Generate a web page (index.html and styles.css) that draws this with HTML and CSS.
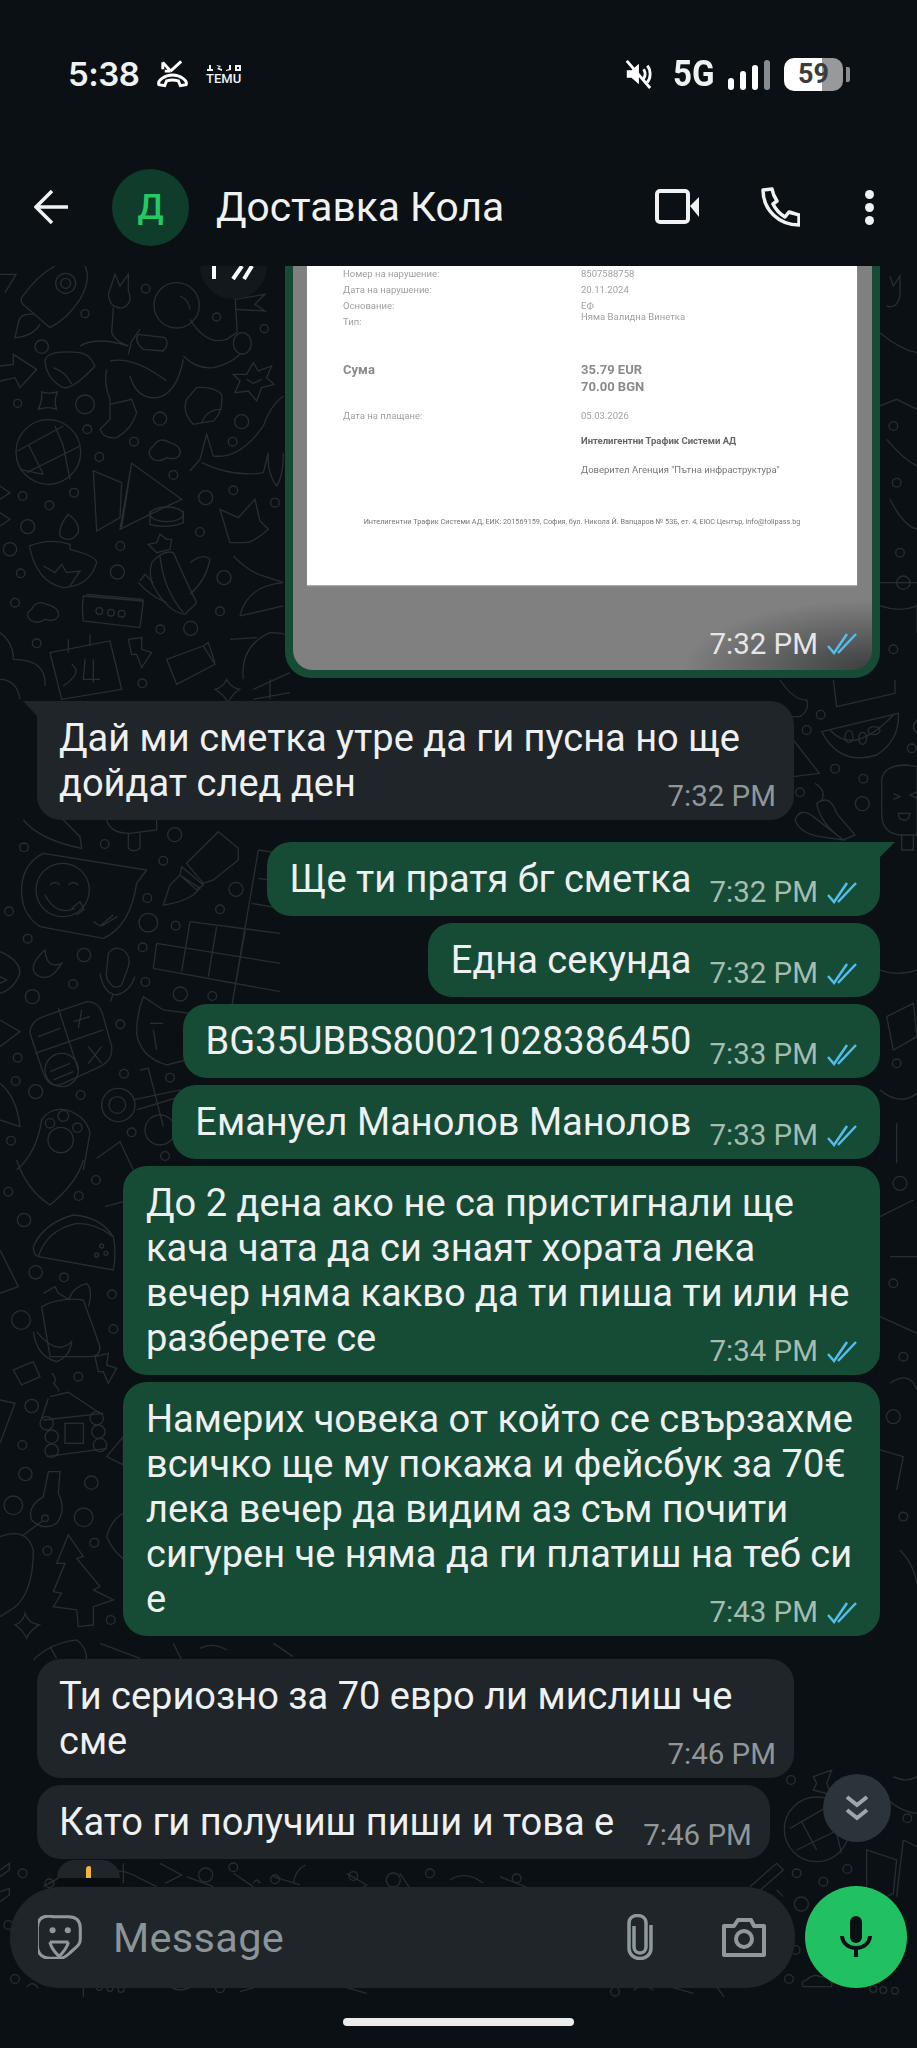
FILE: index.html
```html
<!DOCTYPE html>
<html>
<head>
    <meta charset="utf-8">
    <link rel="stylesheet" href="styles.css">
</head>
<body>
<div class="phone">

    <div class="status">
        <span class="clock">5:38</span>
        <svg class="missed" viewBox="0 0 34 28"><path d="M7 2l8 9M7 2v7M15 11l-6 0M15 11L26 1"/><path d="M3 25c-2-4 6-10 14-10s16 6 14 10l-6 1-2-5c-4-1-8-1-12 0l-2 5z"/></svg>
        <div class="temu">
            <svg viewBox="0 0 36 8"><path d="M1 7h6V5H5V1H3v4H1zM10 1l3 2-2 2 5 2v-2l-3-1 2-2zM20 7l5-1V1h-2v4l-3 1zM29 1h6v6h-6zM31 3v2h2V3z"/></svg>
            <span>TEMU</span>
        </div>
        <div class="status-right">
            <svg class="mute" viewBox="0 0 30 34"><path class="solid" d="M3 13h5l8-7v22l-8-7H3z"/><path class="line" d="M21 12c2 3 2 7 0 10M25 8c4 5 4 13 0 18M3 3l25 29"/></svg>
            <span class="net">5G</span>
            <div class="signal"><i class="s1"></i><i class="s2"></i><i class="s3"></i><i class="s4"></i></div>
            <div class="battery"><span>59</span></div>
            <div class="battery-tip"></div>
        </div>
    </div>

    <div class="appbar">
        <svg class="back" viewBox="0 0 36 36"><path d="M34 18H3M18 2L2 18l16 16"/></svg>
        <div class="avatar">Д</div>
        <div class="title">Доставка Кола</div>
        <svg class="video" viewBox="0 0 44 36"><rect x="2" y="2" width="31" height="31" rx="3"/><path class="solid" d="M35 17l9-9v20z"/></svg>
        <svg class="call" viewBox="0 0 40 40"><path d="M3 3l9-1c1 6 3 9 5 12l-4 3c3 6 7 10 12 13l4-5c3 1 7 2 10 3v10c-20 0-36-15-36-35z"/></svg>
        <div class="dots"><i></i><i></i><i></i></div>
    </div>

    <div class="chat">
        <svg class="wall" viewBox="0 266 917 1731">
            <g transform="translate(0 266) scale(.3333)">
                <path d="M165 0Q110 30 65 95Q60 110 75 120L150 185Q200 160 240 100Q275 40 255 0M100 145Q60 140 55 170L45 215Q100 210 120 175M0 25H48L15 80M0 300L40 295V265L110 310L60 365L45 335L0 345"/>
                <circle cx="197" cy="52" r="30"/><circle cx="197" cy="52" r="15"/>
                <path d="M325 85L345 25L360 60L385 25V75Q400 110 370 125Q330 130 325 85M340 125L335 200Q345 225 385 240M540 90Q565 100 570 130M420 190L395 225L385 265M570 160Q620 240 680 220L710 200M705 90L712 200M705 100L795 85L765 115L795 135L705 130"/>
                <circle cx="530" cy="118" r="68"/><ellipse cx="727" cy="232" rx="27" ry="32"/>
                <path d="M415 205L495 215Q510 235 490 255L430 250Q400 225 415 205M240 240Q290 210 385 240M135 285Q140 250 240 260Q270 265 285 300Q220 370 190 365Q140 340 135 285M160 305Q200 320 215 355M550 270Q590 310 640 305Q690 295 720 265M330 285Q400 270 500 345M320 310Q310 350 330 400V460L300 490Q310 520 350 515Q395 490 410 440L395 400L330 415M390 330Q410 400 470 395Q530 385 550 280"/>
                <path d="M760 290L775 315L815 300L800 335L822 355L785 365L770 405L745 375L705 380L720 345L700 325L740 325ZM740 340L760 352L785 340M590 365Q640 360 665 385Q670 440 640 465L580 475Q545 440 560 400ZM605 470Q620 430 665 430"/>
                <path d="M570 615L600 580L620 505L640 570Q720 580 790 480Q810 420 850 390M605 590Q700 635 790 620L805 560Q800 620 830 660Q850 630 850 560M125 378Q145 385 172 378Q160 405 170 430Q145 420 115 430Q128 405 125 378Z"/>
                <circle cx="145" cy="558" r="97"/><path d="M52 555L190 480M80 620L240 540M85 535L130 625M190 540L165 480M190 540L210 640M130 625L60 610"/>
                <path d="M280 615L365 650L360 755L290 795ZM395 592L545 700L450 745L360 790ZM395 592L365 785M450 735V775Q500 790 550 770V735"/><ellipse cx="500" cy="745" rx="50" ry="22"/>
                <path d="M460 580Q435 560 460 540Q480 510 510 530Q545 540 540 565Q530 585 500 575Q480 590 460 580ZM95 1065Q70 1045 95 1030Q110 1000 140 1015Q180 1025 175 1050Q165 1070 135 1060Q115 1075 95 1065Z"/>
                <path d="M88 840Q150 815 210 835V850Q290 870 290 890Q270 960 190 965Q110 950 88 840ZM205 745Q175 780 180 810Q210 835 235 800Q240 770 205 745ZM130 900L165 920L185 895L200 920L240 915L210 960"/>
                <path d="M455 890Q490 850 520 860Q560 950 590 1010L555 1045Q505 1040 460 960Q445 930 455 890ZM445 835L470 830L480 805L500 820L515 820L510 850L470 860ZM480 870Q490 970 550 1040M420 945L435 925L460 950M415 950Q450 990 500 1010M570 890Q610 860 630 880Q620 940 570 985"/>
                <path d="M250 990L430 1005L420 1085L250 1065Q245 1030 250 990ZM260 985L430 1000"/><circle cx="298" cy="1035" r="10"/><circle cx="333" cy="1040" r="10"/><circle cx="365" cy="1043" r="10"/>
                <path d="M150 1160L330 1125L365 1270L185 1300ZM205 1120V1160M270 1105V1140M190 1260Q250 1220 215 1195M255 1180L250 1240H300M280 1180V1250M385 1120L425 1115V1150L455 1160L425 1205L410 1165L395 1165ZM500 1180L610 1140L645 1195L530 1255ZM610 1140L625 1130L645 1190"/>
                <path d="M660 730L715 755L765 700L780 765L805 790Q760 830 735 830H690L675 780ZM700 870Q750 920 790 930L850 950M720 1050Q740 960 850 950M720 1050L850 1020M690 1120L770 1115M730 1240Q720 1140 810 1100Q850 1100 870 1110M760 1270L870 1220M760 1300L870 1280M810 1240V1300M680 1240Q690 1265 720 1270Q695 1285 685 1310Q670 1285 645 1270Q670 1265 680 1240Z"/>
                <path d="M0 660L30 680L0 700M0 740L30 760L0 780M0 1100Q40 1130 40 1180Q140 1180 135 1260M0 1240Q50 1240 60 1300"/>
                <circle cx="255" cy="143" r="12"/><circle cx="125" cy="242" r="20"/><circle cx="437" cy="68" r="13"/><circle cx="650" cy="153" r="12"/><circle cx="793" cy="188" r="12"/><circle cx="53" cy="412" r="12"/><circle cx="255" cy="415" r="28"/><circle cx="262" cy="490" r="13"/><circle cx="480" cy="458" r="20"/><circle cx="725" cy="467" r="21"/><circle cx="402" cy="527" r="13"/><circle cx="298" cy="573" r="13"/><circle cx="698" cy="527" r="13"/><circle cx="520" cy="627" r="13"/><circle cx="68" cy="690" r="13"/><circle cx="222" cy="680" r="13"/><circle cx="148" cy="718" r="13"/><circle cx="83" cy="782" r="21"/><circle cx="30" cy="850" r="20"/><circle cx="617" cy="695" r="21"/><circle cx="700" cy="673" r="13"/><circle cx="825" cy="710" r="13"/><circle cx="600" cy="798" r="13"/><circle cx="361" cy="840" r="13"/><circle cx="352" cy="918" r="21"/><circle cx="62" cy="922" r="13"/><circle cx="672" cy="935" r="21"/><circle cx="45" cy="1010" r="13"/><circle cx="660" cy="1036" r="13"/><circle cx="481" cy="1090" r="13"/><circle cx="572" cy="1087" r="21"/><circle cx="110" cy="1132" r="13"/><circle cx="427" cy="1252" r="13"/>
            </g>
            <g transform="translate(0 820) scale(.3333)">
                <path d="M130 100L440 150L410 190Q390 320 310 355L120 320Q60 280 65 200Q70 130 130 100ZM150 195Q165 180 180 195M205 195Q220 180 235 195M135 225Q170 290 225 265M215 265L240 245L252 268L230 285M280 305L300 318L340 285M305 318L352 290"/>
                <circle cx="188" cy="210" r="80"/>
                <path d="M490 255L510 195L540 165L600 205L580 225Q540 250 490 255ZM545 140L610 195L590 210L540 165ZM560 130L655 35L715 85V120L640 180L610 190Z"/>
                <path d="M470 370L840 430M570 305L840 340M460 445L840 515M470 370L460 445M570 305L545 455M650 320L625 470M735 335L695 560M775 90L695 560M840 100L775 90M775 175L840 185M755 250L840 265"/>
                <path d="M135 390Q80 440 110 465Q150 490 185 430Q140 450 135 390ZM325 400Q345 375 370 390Q395 410 385 440L365 495Q345 510 330 490Q315 475 320 450ZM300 460Q310 520 350 525Q390 515 405 470M338 525L332 545"/>
                <path d="M130 590L260 545Q300 545 310 590L335 680Q340 720 300 740L190 790Q150 810 130 760L90 640Q90 605 130 590ZM175 565L235 750M105 700L310 630M115 650L180 625M220 605L270 590M245 570L235 625M265 680L305 730M305 680L265 730M150 755L210 730M160 780L220 755"/>
                <circle cx="185" cy="750" r="50"/>
                <path d="M430 530L490 570L570 580L560 720L500 735Q420 710 410 640Q410 580 430 530ZM450 610H490M460 630L470 690"/>
                <path d="M400 840L540 810V830L410 870M420 750L445 745L490 920"/><circle cx="355" cy="855" r="50"/><circle cx="352" cy="855" r="25"/><circle cx="480" cy="930" r="45"/>
                <path d="M50 1050Q110 1000 125 900Q150 860 200 870Q260 890 270 940L250 1050"/><circle cx="150" cy="910" r="14"/><circle cx="190" cy="888" r="16"/><circle cx="232" cy="923" r="14"/><circle cx="182" cy="960" r="38"/>
                <path d="M0 395Q60 420 60 460Q40 510 0 520M0 600L60 635L0 680M0 790Q50 830 60 920L0 900M0 470L20 480L0 490M320 0Q330 40 390 40L470 30V0M385 40V85Q400 100 420 85V40M70 0Q120 60 245 85L240 50L190 0M290 1015L360 965L400 1050"/>
                <circle cx="72" cy="82" r="13"/><circle cx="314" cy="72" r="13"/><circle cx="524" cy="44" r="21"/><circle cx="490" cy="122" r="13"/><circle cx="660" cy="268" r="13"/><circle cx="708" cy="208" r="21"/><circle cx="442" cy="234" r="13"/><circle cx="445" cy="308" r="28"/><circle cx="527" cy="317" r="13"/><circle cx="27" cy="274" r="13"/><circle cx="83" cy="356" r="13"/><circle cx="428" cy="382" r="13"/><circle cx="252" cy="405" r="20"/><circle cx="219" cy="492" r="13"/><circle cx="97" cy="530" r="21"/><circle cx="436" cy="486" r="13"/><circle cx="541" cy="522" r="21"/><circle cx="637" cy="528" r="13"/><circle cx="361" cy="613" r="13"/><circle cx="53" cy="713" r="13"/><circle cx="47" cy="783" r="13"/><circle cx="107" cy="815" r="21"/><circle cx="242" cy="825" r="13"/><circle cx="372" cy="761" r="13"/><circle cx="510" cy="773" r="13"/><circle cx="395" cy="937" r="13"/><circle cx="33" cy="962" r="13"/><circle cx="495" cy="1008" r="13"/>
            </g>
            <g transform="translate(0 1160) scale(.3333)">
                <path d="M115 290L340 330Q350 280 340 230Q300 170 220 165Q130 190 100 260Q100 285 115 290ZM115 290Q140 210 230 190Q290 190 340 230M50 0Q80 90 150 135Q230 70 250 0M315 140L370 125"/>
                <circle cx="305" cy="258" r="6"/><circle cx="290" cy="285" r="6"/><circle cx="318" cy="280" r="6"/>
                <path d="M125 440Q180 410 250 420L300 560Q300 590 270 590L150 590ZM130 400L165 380L175 400L210 420M205 420Q220 380 260 370Q280 390 265 440M100 515Q110 590 170 605Q210 590 215 545Q170 590 110 515M285 590L325 580L320 615L350 625L325 670L310 635L295 635ZM40 630L100 605L120 650L65 675Z"/>
                <path d="M150 710L205 697L300 760M145 715L125 775M130 780L310 760M140 890L320 865M155 640Q175 660 160 670Q180 690 175 695"/>
                <rect x="195" y="790" width="55" height="60"/><circle cx="140" cy="790" r="20"/><circle cx="155" cy="830" r="20"/><circle cx="155" cy="872" r="20"/><circle cx="290" cy="775" r="20"/><circle cx="295" cy="815" r="20"/><circle cx="300" cy="855" r="20"/>
                <path d="M145 935H180L175 1000Q200 1050 170 1090Q130 1115 95 1080Q80 1040 130 1010ZM125 1085L70 1125M0 1130Q80 1100 100 1170Q100 1300 40 1345L0 1370"/>
                <circle cx="135" cy="1075" r="10"/>
                <path d="M205 1125L250 1190L230 1195L300 1280L280 1290L340 1320L280 1340V1395L235 1400L230 1350L160 1340L185 1300L160 1295L195 1210L170 1210ZM75 1360Q85 1390 118 1395Q90 1410 80 1435Q70 1410 45 1395Q70 1385 75 1360ZM100 1500Q150 1450 230 1440Q260 1460 260 1500M0 270L55 380L0 400M0 720L45 730L0 850M320 1130Q340 1060 390 1055M320 1130Q340 1180 390 1210M320 890L370 830V915Z"/>
                <circle cx="25" cy="95" r="13"/><circle cx="72" cy="180" r="20"/><circle cx="236" cy="108" r="13"/><circle cx="288" cy="60" r="13"/><circle cx="107" cy="337" r="20"/><circle cx="192" cy="352" r="13"/><circle cx="336" cy="403" r="13"/><circle cx="340" cy="507" r="13"/><circle cx="63" cy="480" r="28"/><circle cx="235" cy="650" r="13"/><circle cx="95" cy="738" r="20"/><circle cx="67" cy="855" r="13"/><circle cx="76" cy="942" r="20"/><circle cx="274" cy="968" r="20"/><circle cx="40" cy="1036" r="28"/><circle cx="251" cy="1072" r="28"/><circle cx="283" cy="1148" r="13"/><circle cx="142" cy="1172" r="13"/><circle cx="332" cy="1380" r="13"/>
            </g>
            <g transform="translate(780 680) scale(.3333)">
                <path d="M125 155L355 100Q360 180 290 225Q180 260 125 155ZM150 150Q220 230 340 105M160 0L170 80L345 40V0"/>
                <ellipse cx="207" cy="170" rx="12" ry="18"/><ellipse cx="248" cy="175" rx="12" ry="18"/><ellipse cx="282" cy="152" rx="18" ry="12"/>
                <path d="M45 420Q60 380 100 410L190 480L120 470Q60 460 45 420ZM110 370Q150 340 170 400L225 465L190 480Q120 430 110 370ZM105 310Q140 330 125 360M305 300Q310 255 380 255L411 260V465H360Q305 460 305 400ZM365 465V510H400V465M40 180L118 280L40 290M355 400H390Q385 425 372 420Q355 420 355 400ZM340 340L360 350L340 358M411 335L390 345L411 355"/>
                <circle cx="122" cy="104" r="13"/><circle cx="80" cy="150" r="13"/><circle cx="165" cy="266" r="13"/><circle cx="250" cy="296" r="13"/><circle cx="247" cy="371" r="21"/><circle cx="395" cy="205" r="13"/><circle cx="60" cy="337" r="13"/>
                <path d="M411 120Q390 140 411 160M0 0Q40 60 80 60Q90 90 60 110H0"/>
            </g>
            <g transform="translate(600 1760) scale(.3333)">
                <circle cx="650" cy="208" r="97"/><path d="M570 205L700 130M590 270L745 195M605 185L650 270M700 180L725 280"/>
                <path d="M800 270L890 300L880 400L800 440ZM910 240L951 260M910 240L890 410M640 50L695 30L680 70L695 105L640 90L650 70ZM620 660Q640 640 660 650Q700 650 695 680H610Q600 665 620 660ZM880 50Q920 70 951 50M830 70Q870 150 951 160"/>
                <circle cx="573" cy="60" r="13"/><circle cx="922" cy="175" r="13"/><circle cx="590" cy="340" r="13"/><circle cx="670" cy="365" r="13"/><circle cx="742" cy="327" r="13"/><circle cx="604" cy="432" r="21"/><circle cx="587" cy="570" r="13"/><circle cx="567" cy="657" r="13"/><circle cx="45" cy="695" r="13"/><circle cx="820" cy="687" r="10"/><circle cx="850" cy="690" r="10"/><circle cx="885" cy="692" r="10"/>
                <path d="M450 380L530 310L550 330L470 400M530 390L550 410M100 690Q130 670 160 690M210 680L280 700M350 680L375 715"/>
            </g>
            <g transform="translate(880 266) scale(.3333)">
                <path d="M30 30L40 60L60 30V90Q50 130 20 120M0 200Q60 250 111 260M0 420L50 400L111 430M20 520Q70 580 111 600M30 700Q70 780 111 790M0 950H111M0 1020Q60 1040 111 1020V1100"/>
                <circle cx="40" cy="480" r="13"/><circle cx="60" cy="860" r="13"/><circle cx="50" cy="650" r="13"/><circle cx="70" cy="950" r="20"/><circle cx="40" cy="1150" r="13"/>
            </g>
            <g transform="translate(880 950) scale(.3333)">
                <path d="M0 60Q50 80 111 60M20 200L100 160L111 260L40 300ZM0 420Q60 470 111 430M50 520V640M0 800L100 750M30 920H111M0 1100L111 1150M30 1300Q90 1260 111 1320M0 1500L70 1520L50 1620M60 1800Q100 1840 111 1900"/>
                <circle cx="50" cy="340" r="13"/><circle cx="60" cy="700" r="21"/><circle cx="40" cy="1000" r="13"/><circle cx="70" cy="1220" r="13"/><circle cx="40" cy="1400" r="21"/><circle cx="70" cy="1700" r="13"/>
            </g>
            <g transform="translate(0 1640) scale(.3333)">
                <path d="M150 20L170 55M300 10L420 55M520 10L545 60M600 25Q640 5 680 30M820 10L880 50"/>
                <path d="M130 740L200 700L260 720M300 705Q350 680 400 705L470 740M560 710L640 740M700 700L760 740M820 710L900 735M1040 700L1100 735L1040 770M1200 700L1240 760M1350 720Q1400 690 1450 730M1500 710L1600 750" />
                <circle cx="1060" cy="708" r="13"/><circle cx="1180" cy="720" r="21"/><circle cx="1290" cy="700" r="13"/><circle cx="1550" cy="715" r="13"/>
            </g>
            <g transform="translate(0 1860) scale(.3333)">
                <path d="M0 30L28 10L28 30L0 50M0 95L28 85L28 105L0 125M370 10V70M480 10L545 45L495 70M760 70Q770 50 780 70M880 70Q885 30 917 15M80 380Q100 360 115 385M250 380V410M510 380Q540 400 575 380M720 395L790 375M1030 380L1100 400"/>
                <circle cx="68" cy="40" r="13"/><circle cx="148" cy="70" r="13"/><circle cx="617" cy="45" r="21"/><circle cx="700" cy="22" r="13"/><circle cx="825" cy="58" r="13"/><circle cx="25" cy="195" r="13"/><circle cx="45" cy="357" r="13"/><circle cx="298" cy="382" r="9"/><circle cx="330" cy="385" r="9"/><circle cx="363" cy="388" r="9"/><circle cx="660" cy="385" r="13"/>
            </g>
        </svg>

        <div class="forward"><svg viewBox="0 0 66 32"><path d="M14 0V13M33 13L42 0M44 13L52 0"/></svg></div>

        <div class="messages">
            <div class="shot">
                <div class="sheet">
                    <div class="row"><span>Номер на нарушение:</span><span>8507588758</span></div>
                    <div class="row"><span>Дата на нарушение:</span><span>20.11.2024</span></div>
                    <div class="row"><span>Основание:</span><span>ЕФ</span></div>
                    <div class="row"><span>Тип:</span><span class="type">Няма Валидна Винетка</span></div>
                    <div class="row sum"><span>Сума</span><span>35.79 EUR</span></div>
                    <div class="row big"><span></span><span>70.00 BGN</span></div>
                    <div class="row paid"><span>Дата на плащане:</span><span>05.03.2026</span></div>
                    <div class="row company"><span></span><b>Интелигентни Трафик Системи АД</b></div>
                    <div class="row agency"><span></span><span>Доверител Агенция "Пътна инфраструктура"</span></div>
                    <div class="legal">Интелигентни Трафик Системи АД, ЕИК: 201569159, София, бул. Никола Й. Вапцаров № 53Б, ет. 4, ЕЮС Център, info@tollpass.bg</div>
                </div>
                <div class="shot-meta">
                    <span>7:32 PM</span>
                    <svg class="ticks" viewBox="0 0 30 22"><path d="M1 13l6 7L20 1M11 20L29 1"/></svg>
                </div>
            </div>

            <div class="msg in wide tail first">Дай ми сметка утре да ги пусна но ще<br>дойдат след ден<span class="meta">7:32 PM</span></div>

            <div class="msg out tail second">Ще ти пратя бг сметка<span class="meta">7:32 PM<svg class="ticks" viewBox="0 0 30 22"><path d="M1 13l6 7L20 1M11 20L29 1"/></svg></span></div>
            <div class="msg out">Една секунда<span class="meta">7:32 PM<svg class="ticks" viewBox="0 0 30 22"><path d="M1 13l6 7L20 1M11 20L29 1"/></svg></span></div>
            <div class="msg out">BG35UBBS80021028386450<span class="meta">7:33 PM<svg class="ticks" viewBox="0 0 30 22"><path d="M1 13l6 7L20 1M11 20L29 1"/></svg></span></div>
            <div class="msg out">Емануел Манолов Манолов<span class="meta">7:33 PM<svg class="ticks" viewBox="0 0 30 22"><path d="M1 13l6 7L20 1M11 20L29 1"/></svg></span></div>
            <div class="msg out wide">До 2 дена ако не са пристигнали ще<br>кача чата да си знаят хората лека<br>вечер няма какво да ти пиша ти или не<br>разберете се<span class="meta">7:34 PM<svg class="ticks" viewBox="0 0 30 22"><path d="M1 13l6 7L20 1M11 20L29 1"/></svg></span></div>
            <div class="msg out wide">Намерих човека от който се свързахме<br>всичко ще му покажа и фейсбук за 70€<br>лека вечер да видим аз съм почити<br>сигурен че няма да ги платиш на теб си<br>е<span class="meta">7:43 PM<svg class="ticks" viewBox="0 0 30 22"><path d="M1 13l6 7L20 1M11 20L29 1"/></svg></span></div>

            <div class="msg in wide third">Ти сериозно за 70 евро ли мислиш че<br>сме<span class="meta">7:46 PM</span></div>
            <div class="msg in">Като ги получиш пиши и това е<span class="meta">7:46 PM</span></div>
        </div>

        <div class="reaction"><i></i></div>

        <div class="scroll-down">
            <svg viewBox="0 0 26 28"><path d="M3 3l10 8 10-8M3 16l10 8 10-8"/></svg>
        </div>

        <div class="composer">
            <div class="input">
                <svg class="sticker" viewBox="115 160 130 130"><path d="M160 165h45q35 0 35 35v30q0 15-12 25l-20 18q-15 15-30 15h-25q-40 0-40-40v-50q0-35 35-35zM150 240h55M205 240q-5 20-30 45M150 240q5 20 25 40"/><circle cx="158" cy="205" r="9"/><circle cx="203" cy="205" r="9"/></svg>
                <span class="placeholder">Message</span>
                <svg class="clip" viewBox="0 0 28 46"><path d="M8 12v21c0 8 12 8 12 0V9C20-1 3-1 3 9v25c0 14 22 14 22 0V11"/></svg>
                <svg class="camera" viewBox="0 0 44 40"><path d="M2 9h10l4-6h13l3 6h10v29H2z"/><circle cx="22" cy="22" r="8"/></svg>
            </div>
            <div class="mic">
                <svg viewBox="0 0 32 42"><rect x="10" y="0" width="12" height="27" rx="6"/><path class="line" d="M2 20c1 16 27 16 28 0M16 32v9"/></svg>
            </div>
        </div>
    </div>

    <div class="navbar"><div class="home"></div></div>
</div>
</body>
</html>
```

FILE: styles.css
```css
* {
    box-sizing: border-box;
}
html, body {
    margin: 0;
    padding: 0;
    background: #0b1014;
}
.phone {
    display: flex;
    flex-direction: column;
    width: 917px;
    height: 2048px;
    overflow: hidden;
    background: #0b1014;
    color: #f0f2f2;
    font-family: Roboto, "Noto Sans", sans-serif;
}

/* status bar */
.status {
    display: flex;
    align-items: center;
    height: 48px;
    margin-top: 50px;
    margin-bottom: 50px;
    padding-left: 68px;
    padding-right: 67px;
}
.clock {
    width: 88px;
    font-family: Inter, Roboto, sans-serif;
    font-size: 33px;
    font-weight: 600;
    letter-spacing: -0.5px;
}
.missed {
    width: 33px;
    height: 28px;
    fill: none;
    stroke: #fff;
    stroke-width: 3;
}
.temu {
    display: flex;
    flex-direction: column;
    margin-left: 17px;
    width: 38px;
    font-size: 13px;
    font-weight: 500;
    line-height: 12px;
    color: #f0f2f2;
}
.temu svg {
    width: 36px;
    height: 8px;
    fill: #f0f2f2;
    margin-bottom: 1px;
}
.status-right {
    display: flex;
    align-items: center;
    margin-left: auto;
}
.mute {
    width: 28px;
    height: 32px;
}
.mute .solid {
    fill: #fff;
}
.mute .line {
    fill: none;
    stroke: #fff;
    stroke-width: 3;
}
.net {
    margin-left: 21px;
    font-size: 36px;
    font-weight: 700;
    transform: scaleX(.92);
    transform-origin: left;
}
.signal {
    display: flex;
    align-items: flex-end;
    gap: 6px;
    margin-left: 10px;
    height: 31px;
}
.signal i {
    display: block;
    width: 6px;
    border-radius: 3px;
    background: #fff;
}
.s1 { height: 12px; }
.s2 { height: 19px; }
.s3 { height: 25px; }
.s4 { height: 30px; background: #8a8d8f !important; }
.battery {
    width: 59px;
    height: 33px;
    margin-left: 14px;
    border-radius: 10px;
    background: linear-gradient(90deg, #fff 0, #fff 38px, #97999b 38px);
    color: #3a3c3e;
    font-size: 27px;
    font-weight: 700;
    line-height: 33px;
    text-align: center;
}
.battery-tip {
    width: 4px;
    height: 15px;
    margin-left: 3px;
    border-radius: 0 2px 2px 0;
    background: #8a8d8f;
}

/* app bar */
.appbar {
    display: flex;
    align-items: center;
    height: 118px;
    padding-left: 34px;
    padding-right: 43px;
}
.back {
    width: 36px;
    height: 36px;
    fill: none;
    stroke: #f0f2f2;
    stroke-width: 3.5;
}
.avatar {
    width: 77px;
    height: 77px;
    margin-left: 42px;
    border-radius: 50%;
    background: #103c2c;
    color: #25c964;
    font-size: 35px;
    font-weight: 500;
    line-height: 77px;
    text-align: center;
}
.title {
    margin-left: 27px;
    font-size: 40.7px;
}
.video {
    width: 44px;
    height: 36px;
    margin-left: auto;
    fill: none;
    stroke: #f0f2f2;
    stroke-width: 4;
}
.video .solid {
    fill: #f0f2f2;
    stroke: none;
}
.call {
    width: 40px;
    height: 40px;
    margin-left: 61px;
    fill: none;
    stroke: #f0f2f2;
    stroke-width: 3.5;
    stroke-linejoin: round;
}
.dots {
    display: flex;
    flex-direction: column;
    gap: 4px;
    margin-left: 65px;
}
.dots i {
    display: block;
    width: 9px;
    height: 9px;
    border-radius: 50%;
    background: #f0f2f2;
}

/* chat */
.chat {
    position: relative;
    flex: 1;
    overflow: hidden;
}
.wall {
    position: absolute;
    top: 0;
    left: 0;
    width: 917px;
    height: 1731px;
    fill: none;
    stroke: #282d31;
    stroke-width: 4;
}
.messages {
    position: relative;
    display: flex;
    flex-direction: column;
    gap: 7px;
    height: 1620px;
    padding-left: 37px;
    padding-right: 37px;
}
.msg {
    position: relative;
    width: fit-content;
    padding: 15px 23px 14px;
    border-radius: 24px;
    font-size: 38px;
    line-height: 45px;
    color: #eef0f1;
}
.msg.wide {
    width: 757px;
}
.in {
    align-self: flex-start;
    padding-left: 22px;
    padding-right: 18px;
    background: #1f2528;
}
.out {
    align-self: flex-end;
    background: #164b36;
}
.first {
    margin-top: 16px;
}
.second {
    margin-top: 15px;
}
.third {
    margin-top: 16px;
}
.tail.in {
    border-top-left-radius: 0;
}
.tail.in::before {
    content: "";
    position: absolute;
    top: 0;
    left: -14px;
    width: 15px;
    height: 16px;
    background: #1f2528;
    clip-path: polygon(0 0, 100% 0, 100% 100%);
}
.tail.out {
    border-top-right-radius: 0;
}
.tail.out::after {
    content: "";
    position: absolute;
    top: 0;
    right: -15px;
    width: 16px;
    height: 16px;
    background: #164b36;
    clip-path: polygon(0 0, 100% 0, 0 100%);
}
.meta {
    float: right;
    display: flex;
    align-items: center;
    margin-top: 13px;
    margin-bottom: -13px;
    margin-left: 29px;
    font-size: 29.5px;
    color: #90979b;
}
.out .meta {
    margin-left: 18px;
    color: #a3bdb1;
}
.ticks {
    width: 30px;
    height: 22px;
    margin-left: 9px;
    fill: none;
    stroke: #53bdeb;
    stroke-width: 2.5;
}

/* image bubble, cut by the top of the list */
.shot {
    position: relative;
    align-self: flex-end;
    width: 595px;
    height: 412px;
    padding: 0 8px 8px;
    border-radius: 0 0 26px 26px;
    background: #164b36;
}
.shot::before {
    content: "";
    position: absolute;
    top: 0;
    left: 8px;
    right: 8px;
    bottom: 8px;
    border-radius: 0 0 20px 20px;
    background: radial-gradient(ellipse 190px 70px at 100% 100%, #3b3d3e, #808080 100%), #808080;
}
.sheet {
    position: relative;
    width: 550px;
    height: 319px;
    margin-left: 14px;
    padding-left: 36px;
    background: #fff;
    box-shadow: 0 1px 1px #aaa;
    color: #a0a0a0;
    font-size: 9.5px;
    filter: blur(.7px);
}
.row {
    display: grid;
    grid-template-columns: 238px 1fr;
    height: 16px;
    line-height: 16px;
}
.row .type {
    margin-top: -5px;
}
.sum {
    margin-top: 31px;
}
.sum, .big {
    height: 17px;
    line-height: 17px;
    font-size: 13px;
    font-weight: 700;
    color: #8a8a8a;
}
.paid {
    margin-top: 13px;
}
.company {
    margin-top: 9px;
    color: #666;
}
.agency {
    margin-top: 13px;
    color: #777;
}
.legal {
    margin-top: 36px;
    margin-left: -36px;
    font-size: 7.3px;
    line-height: 16px;
    text-align: center;
    color: #777;
}
.shot-meta {
    position: absolute;
    right: 23px;
    bottom: 17px;
    display: flex;
    align-items: center;
    font-size: 29.5px;
    color: #e6e6e6;
}
.forward {
    position: absolute;
    top: 0;
    left: 200px;
    width: 67px;
    height: 33px;
    border-radius: 0 0 34px 34px;
    background: #12191e;
}
.forward svg {
    display: block;
    width: 66px;
    height: 32px;
    fill: none;
    stroke: #fff;
    stroke-width: 4;
}
.reaction {
    position: absolute;
    top: 1594px;
    left: 57px;
    width: 63px;
    height: 18px;
    border-radius: 32px 32px 0 0;
    background: #1f2528;
    box-shadow: 0 8px 0 #0a0d10;
}
.reaction i {
    position: absolute;
    top: 6px;
    left: 29px;
    width: 5px;
    height: 12px;
    border-radius: 4px 2px 0 0;
    background: #f4b43c;
}
.scroll-down {
    position: absolute;
    top: 1508px;
    left: 823px;
    display: flex;
    align-items: center;
    justify-content: center;
    width: 68px;
    height: 68px;
    border-radius: 50%;
    background: #2b343a;
}
.scroll-down svg {
    width: 26px;
    height: 28px;
    fill: none;
    stroke: #9da6aa;
    stroke-width: 4;
}

/* composer */
.composer {
    position: relative;
    display: flex;
    align-items: center;
    gap: 10px;
    margin-left: 10px;
}
.input {
    display: flex;
    align-items: center;
    width: 785px;
    height: 101px;
    padding-left: 28px;
    border-radius: 50px;
    background: #1f2528;
}
.sticker {
    width: 44px;
    height: 44px;
    fill: none;
    stroke: #8f989c;
    stroke-width: 9;
    stroke-linejoin: round;
}
.sticker circle {
    fill: #8f989c;
    stroke: none;
}
.placeholder {
    margin-left: 31px;
    font-size: 41.5px;
    letter-spacing: .3px;
    color: #8b9498;
}
.clip {
    width: 28px;
    height: 46px;
    margin-left: auto;
    fill: none;
    stroke: #8f989c;
    stroke-width: 3.5;
}
.camera {
    width: 44px;
    height: 40px;
    margin-left: 68px;
    margin-right: 29px;
    fill: none;
    stroke: #8f989c;
    stroke-width: 4;
    stroke-linejoin: round;
}
.mic {
    display: flex;
    align-items: center;
    justify-content: center;
    width: 102px;
    height: 102px;
    border-radius: 50%;
    background: #21c063;
}
.mic svg {
    width: 32px;
    height: 42px;
    fill: #0b1014;
}
.mic .line {
    fill: none;
    stroke: #0b1014;
    stroke-width: 4;
}

/* gesture bar */
.navbar {
    display: flex;
    justify-content: center;
    height: 51px;
    padding-top: 21px;
}
.home {
    width: 231px;
    height: 8px;
    border-radius: 4px;
    background: #ececec;
}
```
